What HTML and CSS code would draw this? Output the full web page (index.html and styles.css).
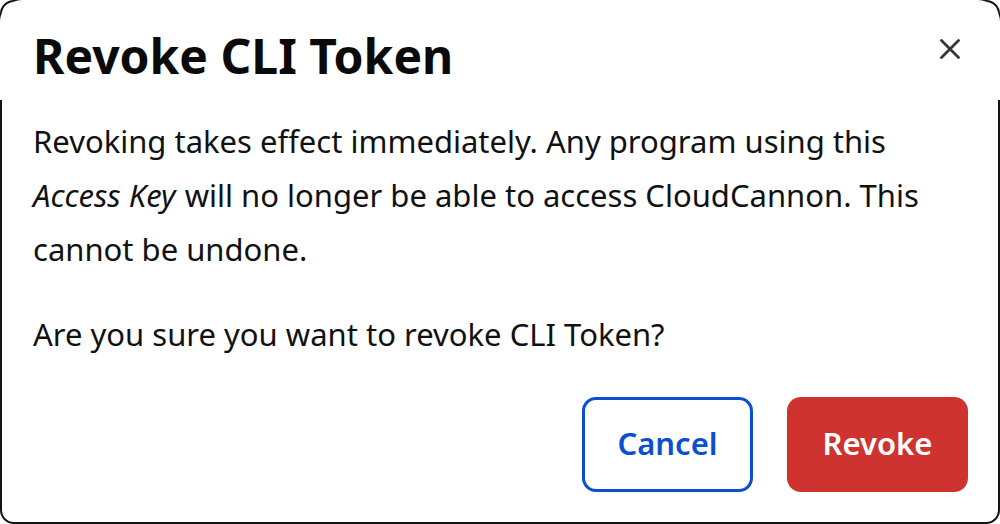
FILE: index.html
```html
<!DOCTYPE html>
<html lang="en">
<head>
<meta charset="utf-8">
<title>Revoke CLI Token</title>
<link rel="stylesheet" href="styles.css">
</head>
<body>
<div class="dialog">
  <div class="dialog-header">
    <h1 class="dialog-title">Revoke CLI Token</h1>
    <button class="close-btn" aria-label="Close">
      <svg width="20" height="20" viewBox="0 0 20 20"><path d="M1.5 1.5 L18.5 18.5 M18.5 1.5 L1.5 18.5" stroke="#363636" stroke-width="2.8" stroke-linecap="round" fill="none"/></svg>
    </button>
  </div>
  <div class="dialog-body">
    <p>Revoking takes effect immediately. Any program using this <em>Access Key</em> will no longer be able to access CloudCannon. This cannot be undone.</p>
    <p>Are you sure you want to revoke CLI Token?</p>
  </div>
  <div class="dialog-footer">
    <button class="btn btn-outline">Cancel</button>
    <button class="btn btn-danger">Revoke</button>
  </div>
</div>
</body>
</html>
```
FILE: styles.css
```css
* { box-sizing: border-box; }
html, body { margin: 0; padding: 0; background: #fff; }
body { font-family: "Noto Sans", "Open Sans", sans-serif; color: #111; }
.dialog {
  width: 1000px;
  height: 524px;
  border: 2px solid #141414;
  border-radius: 14px;
  display: flex;
  flex-direction: column;
}
.dialog-header {
  margin: -2px -2px 0;
  height: 100px;
  background: #fff;
  border-radius: 22px 22px 0 0;
  display: flex;
  align-items: center;
  justify-content: space-between;
  padding: 0 40px 0 33px;
}
.dialog-title {
  margin: 0;
  font-size: 48px;
  font-weight: 700;
  line-height: 1;
  color: #0a0a0a;
  padding-top: 12px;
}
.close-btn {
  border: 0;
  background: none;
  padding: 0;
  width: 20px;
  height: 20px;
  display: flex;
  margin-top: -2px;
}
.dialog-body {
  padding: 14px 30px 0 31px;
}
.dialog-body p {
  margin: 0 0 31px;
  font-size: 31px;
  line-height: 54px;
  color: #111;
}
.dialog-body em {
  margin-right: 1px;
}
.dialog-footer {
  display: flex;
  justify-content: flex-end;
  gap: 34px;
  padding: 0 30px 0 0;
  margin-top: auto;
  margin-bottom: 30px;
}
.btn {
  height: 95px;
  border-radius: 14px;
  font-family: "Noto Sans", "Open Sans", sans-serif;
  font-size: 31px;
  font-weight: 600;
  padding: 0 0 4px;
}
.btn-outline {
  background: #fff;
  border: 3px solid #0a4fd2;
  color: #0a4fd2;
  width: 171px;
}
.btn-danger {
  background: #cf3330;
  border: 0;
  color: #fff;
  width: 181px;
}
```
